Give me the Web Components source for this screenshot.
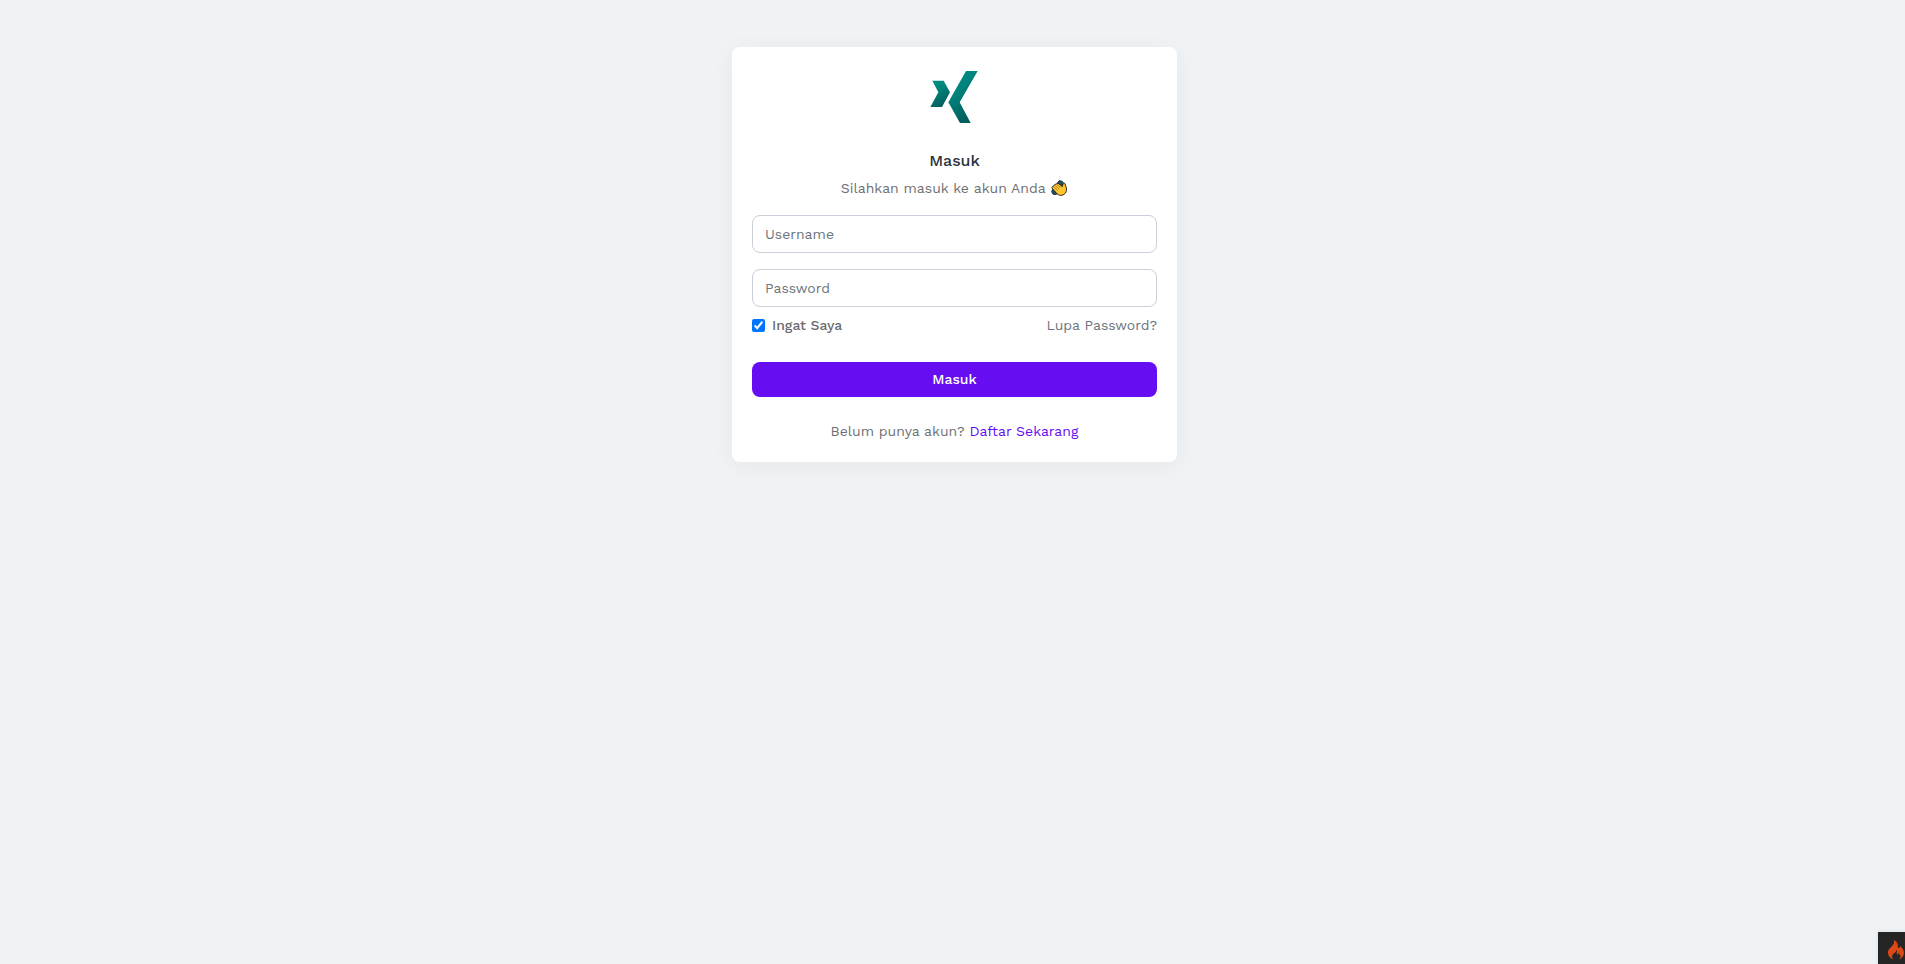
<!DOCTYPE html>
<html lang="id">
<head>
<meta charset="utf-8">
<meta name="viewport" content="width=device-width, initial-scale=1">
<title>Masuk</title>
<style>
  body { margin: 0; min-height: 100vh; background: #eff3f6; color: #6f7073; font: 14px/21px "Work Sans", "Noto Sans", sans-serif; }
</style>
</head>
<body>
<login-page></login-page>
<debug-toolbar></debug-toolbar>

<script>
class Base extends HTMLElement {
  connectedCallback() {
    if (this.shadowRoot) return;
    this.attachShadow({ mode: "open" }).innerHTML = this.render();
  }
}

class BrandLogo extends Base {
  render() {
    return `<style>
      :host { display: block; height: 54px; }
      svg { display: block; margin: 0 auto; }
    </style>
    <svg width="50" height="54" viewBox="631 105 150 162" role="img" aria-label="Logo">
      <defs><linearGradient id="g" x1="0" y1="0" x2=".5" y2="1"><stop offset="0" stop-color="#009489"/><stop offset=".45" stop-color="#00827c"/><stop offset="1" stop-color="#005f5b"/></linearGradient></defs>
      <path fill="url(#g)" d="M638 137h34l19 35-24 44h-35l24-44z"/>
      <path fill="url(#g)" d="M739 108h35l-54 94 33 62h-32l-35-62z"/>
    </svg>`;
  }
}

class ClapIcon extends Base {
  render() {
    return `<style>
      :host { display: inline-block; width: 18px; height: 16px; vertical-align: -3px; }
      svg { display: block; margin: 0 auto; }
    </style>
    <svg width="16" height="16" viewBox="0 0 16 16" role="img" aria-label="Tepuk tangan">
      <path d="M6 3.500L8.200.7l2.400.3 1.600 1.600-.8 3zM1.500 9.500L.6 11.700l1.500 2.600 3.200.2 1-1.500z" fill="#1d566b" stroke="#14252c" stroke-width=".9"/>
      <path d="M.9 7.900C.7 7 1.500 6.300 2.300 6.500c-.1-1 .8-1.700 1.700-1.400.1-1 1.100-1.500 1.900-1 .3-.8 1.200-.9 1.800-.4l3.700 3 .5-2.900c.4-1.200 2-1 2.200.2l1.200 3.700c.7 2.900-.3 5.300-2.300 6.700-2.200 1.500-5 1.300-7-.6z" fill="#ffc62f" stroke="#181713" stroke-width=".9"/>
      <path d="M2.700 6.800l3.900 3.700M4.300 5.500l3.700 3.600M6.100 4.500l3.300 3.200" fill="none" stroke="#8d6520" stroke-width=".7"/>
    </svg>`;
  }
}

class TextField extends Base {
  render() {
    const label = this.getAttribute("label");
    return `<style>
      :host { display: block; }
      label { display: block; }
      input { display: block; box-sizing: border-box; width: 100%; height: 38px; padding: 0 12px; border: 1px solid #cacfda; border-radius: 8px; background: #fff; color: #495057; font: inherit; outline-color: #660df2; }
      input::placeholder { color: #6c757d; opacity: 1; }
    </style>
    <label><input type="${this.getAttribute("type")}" placeholder="${label}" aria-label="${label}"></label>`;
  }
}

class CheckField extends Base {
  render() {
    return `<style>
      :host { display: block; }
      label { display: flex; align-items: center; gap: 7px; font-weight: 500; color: #6a6b6e; }
      input { width: 13px; height: 13px; margin: 0; accent-color: #0075ff; }
    </style>
    <label><input type="checkbox" checked><span><slot></slot></span></label>`;
  }
}

class PrimaryButton extends Base {
  render() {
    return `<style>
      :host { display: block; }
      button { display: block; width: 100%; height: 35px; padding: 0; border: 0; border-radius: 8px; background: #660df2; color: #fff; font: inherit; font-weight: 500; cursor: pointer; }
    </style>
    <button type="button"><slot></slot></button>`;
  }
}

class LoginCard extends Base {
  render() {
    return `<style>
      :host { display: block; box-sizing: border-box; width: 100%; max-width: 445px; padding: 23px 20px 20px; border-radius: 8px; background: #fff; box-shadow: 0 4px 24px rgba(34, 41, 47, .05); }
      header { text-align: center; }
      h1 { margin: 25px 0 5px; color: #2b3340; font-size: 16px; line-height: 24px; font-weight: 500; }
      p { margin: 0; text-align: center; }
      form { display: grid; gap: 16px; margin-top: 16px; }
      .options { display: flex; justify-content: space-between; margin: -8px 0 10px; }
      a { color: #660df2; text-decoration: none; }
      .muted { color: #6c757d; }
      footer { margin-top: 24px; text-align: center; }
    </style>
    <header>
      <brand-logo></brand-logo>
      <h1>Masuk</h1>
      <p>Silahkan masuk ke akun Anda <clap-icon></clap-icon></p>
    </header>
    <form>
      <text-field type="text" label="Username"></text-field>
      <text-field type="password" label="Password"></text-field>
      <div class="options"><check-field>Ingat Saya</check-field><a class="muted" href="#lupa">Lupa Password?</a></div>
      <primary-button>Masuk</primary-button>
    </form>
    <footer>Belum punya akun? <a href="#daftar">Daftar Sekarang</a></footer>`;
  }
}

class LoginPage extends Base {
  render() {
    return `<style>
      :host { display: block; padding: 47px 12px 47px 16px; }
      main { display: flex; justify-content: center; }
    </style>
    <main><login-card></login-card></main>`;
  }
}

class DebugToolbar extends Base {
  render() {
    return `<style>
      :host { position: fixed; right: 0; bottom: 0; width: 27px; height: 32px; overflow: hidden; background: #252525; box-shadow: 0 0 4px rgba(120, 130, 140, .2); }
      a { display: block; padding: 7px 0 0 9px; }
      svg { display: block; }
    </style>
    <a href="#debug" aria-label="Debug"><svg width="18" height="22" viewBox="0 0 18 22">
      <path fill="#dd4814" d="M6.500 20.500C3.500 19.300 1 17 1 13.700c0-3.200 2.600-4.800 4.500-7.100C7 4.800 7.500 3 6.800.9c2.600 1 4.300 3.500 4 6-.1 1.700.5 2.300 1.200 2.200.9-.1 1.200-1 .8-2.300 2.300 1.900 4.200 4.300 4.200 7 0 3.100-2 5.500-5.200 6.800 1.400-1.200 2-2.300 1.700-3.500-.3-1.300-1.400-2-1.600-3.300-.7.4-.9 1.100-.7 2-.9-.3-1.600-.6-1.600-1.500-.1-1.100.9-2.200.1-3.600-.1 1.700-1.300 2.500-2.600 3.600C4.500 16.400 4.300 18.800 6.500 20.500z"/>
    </svg></a>`;
  }
}

customElements.define("brand-logo", BrandLogo);
customElements.define("clap-icon", ClapIcon);
customElements.define("text-field", TextField);
customElements.define("check-field", CheckField);
customElements.define("primary-button", PrimaryButton);
customElements.define("login-card", LoginCard);
customElements.define("login-page", LoginPage);
customElements.define("debug-toolbar", DebugToolbar);
</script>
</body>
</html>
